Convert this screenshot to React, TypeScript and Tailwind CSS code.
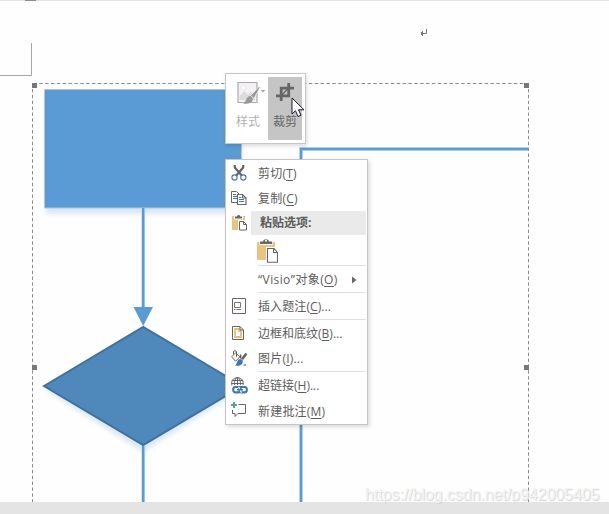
import type { ReactNode } from "react";

const Svg = ({ w, h, vb, children, className = "" }: { w: number; h: number; vb?: string; children: ReactNode; className?: string }) => (
  <svg width={w} height={h} viewBox={vb ?? `0 0 ${w} ${h}`} fill="none" className={`shrink-0 ${className}`}>
    {children}
  </svg>
);

const CutIcon = () => (
  <Svg w={16} h={16} className="relative -top-px">
    <path d="M3.800 0v2.500L11 10.800M12.200 0v2.500L5 10.800" stroke="#666" strokeWidth="2.200" />
    <circle cx="3.500" cy="12.500" r="2.600" fill="#fff" stroke="#3f76b0" strokeWidth="1.100" />
    <circle cx="12.300" cy="12.500" r="2.600" fill="#fff" stroke="#3f76b0" strokeWidth="1.100" />
  </Svg>
);

const CopyIcon = () => (
  <Svg w={16} h={16} className="relative -top-px">
    <path d="M.5 1.500h5l3 3v8h-8z" fill="#fff" stroke="#666" />
    <path d="M2 4.500h3M2 6.500h4M2 8.500h4" stroke="#3f76b0" />
    <path d="M6.500 4.500h5l3.500 3.500v6.500H6.500z" fill="#fff" stroke="#666" strokeWidth="1.2" />
    <path d="M11.500 4.500V8H15" stroke="#666" />
    <path d="M8 7.500h2.500M8 9.500h5M8 11.500h5" stroke="#3f76b0" />
  </Svg>
);

const PasteIcon = () => (
  <Svg w={16} h={17} className="relative -top-px">
    <path d="M0 2h13v14H0z" fill="#e9c381" />
    <path d="M2 1.500h9v4H2z" fill="#fff" />
    <path d="M3 4.500V2.500h2C5 .4 8.200.4 8.200 2.500H10v2z" fill="#666" />
    <path d="M6 6h9v11H6z" fill="#fff" />
    <path d="M7.500 7.500h4l3 3v5.500h-7zM11.500 7.500v3h3" fill="#fff" stroke="#666" />
  </Svg>
);

const PasteLargeIcon = () => (
  <Svg w={21} h={24}>
    <path d="M0 3h18v18H0z" fill="#e9c381" />
    <path d="M2.500 1.500h13v4.500h-13z" fill="#fff" />
    <path d="M3 5V2.500h3C6.500-.5 11.500-.5 12 2.500h3V5z" fill="#666" />
    <circle cx="9" cy="1.800" r="1" fill="#fff" />
    <path d="M9 8h12v16H9z" fill="#fff" />
    <path d="M10.500 9.500H17l3.500 4v9.800h-10zM16.500 9.500v4h4" fill="#fff" stroke="#666" strokeWidth="1.1" />
  </Svg>
);

const CaptionIcon = () => (
  <Svg w={14} h={16}>
    <path d="M.5.500h13v15H.5z" stroke="#666" />
    <path d="M2.500 4.500h6v5h-6z" stroke="#777" />
    <path d="M2 11.500h1.500M4.500 11.500H9" stroke="#d65532" />
  </Svg>
);

const BorderIcon = () => (
  <Svg w={12} h={14} className="relative -left-px">
    <path d="M.5.500H8L11.500 4v9.500H.5z" stroke="#666" fill="#fff" />
    <path d="M3 3h4v2h2v6H3z" fill="#fff" stroke="#e9bd75" strokeWidth="1.800" />
    <path d="M8 .500V4h3.500" stroke="#666" />
  </Svg>
);

const PictureFormatIcon = () => (
  <Svg w={16} h={16} className="relative -top-px">
    <path d="M4.500 2.800l4.500 4-4.500 4.500L.7 6.800z" fill="#fff" stroke="#666" />
    <path d="M2.500 4.500V2C2.500.3 5.500.3 5.500 2v5" stroke="#666" />
    <path d="M9.700 4.500v4" stroke="#555" strokeWidth="1.300" />
    <path d="M15.500 3.500L11 9.300" stroke="#666" strokeWidth="2.600" />
    <path d="M9 9c2.400.2 3.600 2 2.400 4.200C10 15.900 7 16 4 15.500c2.300-.8 1.500-6 5-6.500z" fill="#3f76b0" />
    <path d="M12.500 15h2.500" stroke="#3f76b0" strokeWidth="1.200" />
  </Svg>
);

const LinkIcon = () => (
  <Svg w={17} h={17}>
    <g stroke="#666">
      <path d="M1 8.500C-.5 4 2.500.7 6.500.7S13 4 12 8.500M3.700 8.500C3 4 4.500.7 6.500.7S10 4 9.300 8.500M.8 3.500h11.400M.5 6.500h12M6.500 1v7" />
    </g>
    <path d="M1.200 8.300H17V17H1.200z" fill="#fff" />
    <g stroke="#3f76b0" strokeWidth="2.100">
      <rect x="2.200" y="10" width="7.500" height="5.400" rx="2.300" />
      <rect x="8.300" y="10" width="7.500" height="5.400" rx="2.300" />
    </g>
    <path d="M7.600 9.800l2.800 6" stroke="#fff" strokeWidth="1.100" />
    <path d="M6 12.700h6" stroke="#3f76b0" strokeWidth="1.500" />
  </Svg>
);

const CommentIcon = () => (
  <Svg w={16} h={16} className="relative -top-px">
    <path d="M3 0v6M0 3h6" stroke="#5ca486" strokeWidth="2" />
    <path d="M7.500 2.500h7v9H7l-3 3v-3H1.500V8" stroke="#666" />
  </Svg>
);

const StyleIcon = () => (
  <Svg w={29} h={25}>
    <path d="M1 1.500h19v20H1z" fill="#f4f0f5" stroke="#aaa" strokeWidth="1.200" />
    <circle cx="6.500" cy="6.700" r="2" fill="#fff" stroke="#ddd" strokeWidth=".5" />
    <path d="M2.500 15l5-5 3.500 4 3-3 4 4v4h-15.500z" fill="#dcdadd" />
    <path d="M22 5.500l1 1-6 11-3.500-2.800z" fill="#999" stroke="#f8f8f8" strokeWidth=".7" />
    <path d="M12.500 15c3 .3 4.500 3.200 2.500 5.500-2 2.300-5.500 2.200-9 2.200 3.500-1.600 2.500-6 6.500-7.700z" fill="#999" />
    <path d="M23.500 9h5l-2.500 2.500z" fill="#aaa" />
  </Svg>
);

const CropIcon = () => (
  <Svg w={18} h={18}>
    <path d="M0 12.800h12.700V0M5.200 18V5.200H18" stroke="#666" strokeWidth="2.800" />
    <path d="M14 3.500L4 14" stroke="#666" strokeWidth="1.200" />
  </Svg>
);

function Item({ icon, label, hotkey, after = "", arrow = false, height = "h-[25px]", tracking = "" }: {
  icon?: ReactNode; label: string; hotkey: string; after?: string; arrow?: boolean; height?: string; tracking?: string;
}) {
  return (
    <div className={`flex items-center ${height}`}>
      <div className="flex w-[26px] shrink-0 justify-center">{icon}</div>
      <div className="flex flex-1 items-center justify-between whitespace-nowrap pl-1.5 pr-[9px] pt-px leading-4">
        <span className={tracking}>{label}(<span className="underline underline-offset-2">{hotkey}</span>){after}</span>
        {arrow && <Svg w={5} h={8}><path d="M0 .5l4.500 3.500L0 7.500z" fill="#666" /></Svg>}
      </div>
    </div>
  );
}

const Separator = () => <div className="ml-8 h-px shrink-0 bg-[#dddfe2]" />;

function Diagram() {
  return (
    <svg className="absolute inset-0" width="609" height="502" viewBox="0 0 609 502" fill="none">
      <defs>
        <filter id="soft" x="-20%" y="-20%" width="140%" height="140%"><feGaussianBlur stdDeviation="2.200" /></filter>
      </defs>
      <path d="M0 .500h609" stroke="#e4e4e4" />
      <path d="M25 .500h11" stroke="#8c8c8c" />
      <path d="M31.500 43v32.500H0" stroke="#a6a6a6" />
      <path d="M426.500 29v4.500H421M422.500 31v5M421.500 32v3" stroke="#777" />
      <g stroke="#8a8a8a" strokeDasharray="3.400 2.460">
        <path d="M39.300 83.500H524" />
        <path d="M32.500 89V502M528.500 89V502" />
      </g>
      <path d="M46 94h196v120H46zM46 391l97-55 97 55-97 61z" fill="#5b9bd5" opacity=".22" filter="url(#soft)" />
      <path d="M44.500 89.500H241.500v118.500H44.500z" fill="#5b9bd5" stroke="#b9c3cd" />
      <path d="M143.200 208v100M143.200 446v56M301 502V149h227" stroke="#c9dff3" strokeWidth="4" />
      <path d="M143.200 208v100M143.200 446v56M301 502V149h227" stroke="#5b9bd5" strokeWidth="2.400" />
      <path d="M133.500 307h19.500l-9.800 19z" fill="#5b9bd5" />
      <path d="M44 386l99.200-59.200L242.500 386l-99.300 59z" fill="#4f88ba" stroke="#40719c" strokeWidth="2" />
      <path d="M32 83h5v5h-5zM524 83h5v5h-5zM32 365h5v5h-5zM524 365h5v5h-5z" fill="#777" />
    </svg>
  );
}

export default function App() {
  return (
    <div className="relative flex h-[514px] w-[609px] flex-col overflow-hidden bg-[#fefefe] font-['Open_Sans','Noto_Sans_CJK_SC',sans-serif] text-[12px] text-[#5c5c5c]">
      <div className="flex-1"><Diagram /></div>
      <div className="h-3 bg-[#e4e4e4]" />

      <div className="absolute left-[225px] top-[73px] flex h-[71px] w-[81px] border border-[#c6c6c6] bg-white py-[3px] pl-[2px] pr-[3px] shadow-[1px_2px_4px_rgba(0,0,0,0.14)]">
        <div className="flex w-10 flex-col items-center pt-[4px] text-[#b0b0b0]">
          <div className="pl-[7px]"><StyleIcon /></div>
          <span className="mt-[8px] leading-4">样式</span>
        </div>
        <div className="flex h-[63px] w-[34px] flex-col items-center bg-[#c5c5c5] pt-[6px] text-[#666]">
          <CropIcon />
          <span className="mt-[13px] leading-4">裁剪</span>
        </div>
      </div>

      <div className="absolute left-[225px] top-[159px] flex h-[266px] w-[143px] flex-col border border-[#c6c6c6] bg-white pr-px pt-px shadow-[2px_2px_4px_rgba(0,0,0,0.14)]">
        <Item icon={<CutIcon />} label="剪切" hotkey="T" tracking="tracking-[0.2px]" />
        <Item icon={<CopyIcon />} label="复制" hotkey="C" tracking="tracking-[0.2px]" />
        <div className="flex h-6 items-center">
          <div className="flex w-[25px] justify-center pl-[2px]"><PasteIcon /></div>
          <div className="flex h-full flex-1 items-center bg-[#eaeaea] pl-[9px] font-bold">粘贴选项:</div>
        </div>
        <div className="flex h-[30px] items-start pl-[31px] pt-[4px]"><PasteLargeIcon /></div>
        <Separator />
        <Item label="“Visio”对象" hotkey="O" arrow height="h-[26px]" tracking="tracking-[0.4px]" />
        <Separator />
        <Item icon={<CaptionIcon />} label="插入题注" hotkey="C" after="..." height="h-[26px]" tracking="tracking-[0.1px]" />
        <Separator />
        <Item icon={<BorderIcon />} label="边框和底纹" hotkey="B" after="..." height="h-[26px]" />
        <Item icon={<PictureFormatIcon />} label="图片" hotkey="I" after="..." tracking="tracking-[0.2px]" />
        <Separator />
        <Item icon={<LinkIcon />} label="超链接" hotkey="H" after="..." height="h-[27px]" />
        <Item icon={<CommentIcon />} label="新建批注" hotkey="M" height="h-6" tracking="tracking-[0.2px]" />
      </div>

      <svg className="absolute left-[291px] top-[97px]" width="14" height="21" viewBox="0 0 14 21">
        <path d="M1 1v16l3.500-3.200L7 19.500l3-1.300-2.500-5.400H13z" fill="#fff" stroke="#19192b" />
      </svg>
      <div className="absolute left-[365px] top-[485px] whitespace-nowrap font-['Liberation_Sans',sans-serif] text-[16px] leading-5 tracking-[-0.07px] text-[#f3f3f3] [text-shadow:1px_1px_1px_#d2d2d2]">https://blog.csdn.net/p942005405</div>
    </div>
  );
}
